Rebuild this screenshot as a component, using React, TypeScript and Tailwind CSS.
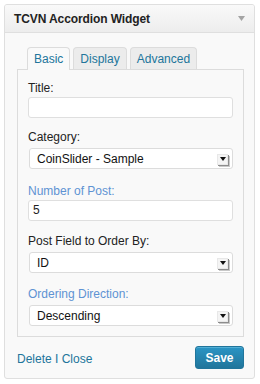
import React from 'react';

const font = { fontFamily: '"Liberation Sans", Arial, sans-serif' };

const Label = ({ text, blue, mt }: { text: string; blue?: boolean; mt: string }) => (
  <div className={`${mt} text-[12px] leading-[15px] ${blue ? 'text-[#5e93d3]' : 'text-[#222]'}`}>{text}</div>
);

const TextInput = ({ value }: { value?: string }) => (
  <div className="mt-[1px] h-[21px] w-[205px] rounded-[3px] border border-[#dfdfdf] bg-white pl-[4px] text-[12px] leading-[19px] text-[#222]">
    {value}
  </div>
);

const Select = ({ value }: { value: string }) => (
  <div className="mt-[3px] ml-[1px] flex h-[21px] w-[204px] items-center rounded-[3px] border border-[#dcdcdc] bg-white pl-[7px] pr-[4px] text-[12px] text-[#111]">
    <span className="flex-1">{value}</span>
    <div className="mt-[1px] flex h-[11px] w-[11px] items-center justify-center border border-[#e8e8e8] bg-[#f4f4f4] shadow-[1px_1px_0_#8c8c8c,2px_2px_0_#c8c8c8]">
      <svg width="6" height="4" viewBox="0 0 6 4">
        <path d="M0 0h6L3 4z" fill="#111" />
      </svg>
    </div>
  </div>
);

export default function App() {
  return (
    <div className="h-[384px] w-[260px] bg-white pt-[4px] pl-[4px]" style={font}>
      <div className="h-[375px] w-[251px] overflow-hidden rounded-[3px] border border-[#dfdfdf] bg-[#f9f9f9]">
        {/* header */}
        <div className="flex h-[28px] items-center justify-between border-b border-[#dfdfdf] bg-gradient-to-b from-[#f9f9f9] to-[#ededed] pl-[9px] pr-[9px]">
          <span className="text-[12px] font-bold tracking-[-0.1px] text-[#222]">TCVN Accordion Widget</span>
          <svg width="7" height="5" viewBox="0 0 7 5">
            <path d="M0 0h7L3.5 5z" fill="#a3a3a3" />
          </svg>
        </div>
        {/* body */}
        <div className="pl-[12px] pt-[14px]">
          <div className="flex items-end pl-[10px] text-[12px] leading-[15px]">
            <div className="relative z-10 -mb-px h-[23px] rounded-t-[4px] border border-b-0 border-[#dcdcdc] bg-[#f9f9f9] px-[6px] pt-[4px] text-[#21759b]">Basic</div>
            <div className="ml-[3px] h-[22px] rounded-t-[4px] border border-b-0 border-[#dcdcdc] bg-[#ececec] px-[6px] pt-[4px] text-[#21759b]">Display</div>
            <div className="ml-[3px] h-[22px] rounded-t-[4px] border border-b-0 border-[#dcdcdc] bg-[#ececec] px-[6px] pt-[4px] text-[#21759b]">Advanced</div>
          </div>
          <div className="h-[268px] w-[227px] border border-[#dcdcdc] bg-[#f9f9f9] pl-[10px] pt-[11px]">
            <Label text="Title:" mt="mt-0" />
            <TextInput />
            <Label text="Category:" mt="mt-[12px]" />
            <Select value="CoinSlider - Sample" />
            <Label text="Number of Post:" mt="mt-[15px]" blue />
            <TextInput value="5" />
            <Label text="Post Field to Order By:" mt="mt-[13px]" />
            <Select value="ID" />
            <Label text="Ordering Direction:" mt="mt-[14px]" blue />
            <Select value="Descending" />
          </div>
          <div className="mt-[9px] flex w-[227px] items-start justify-between">
            <span className="mt-[6px] text-[12px] leading-[15px] text-[#21759b]">Delete I Close</span>
            <button className="h-[23px] w-[49px] rounded-[3px] border border-[#21759b] bg-gradient-to-b from-[#2a95c5] to-[#21759b] text-[12px] font-bold text-white shadow-[inset_0_1px_0_rgba(120,200,230,0.5)]">
              Save
            </button>
          </div>
        </div>
      </div>
    </div>
  );
}
